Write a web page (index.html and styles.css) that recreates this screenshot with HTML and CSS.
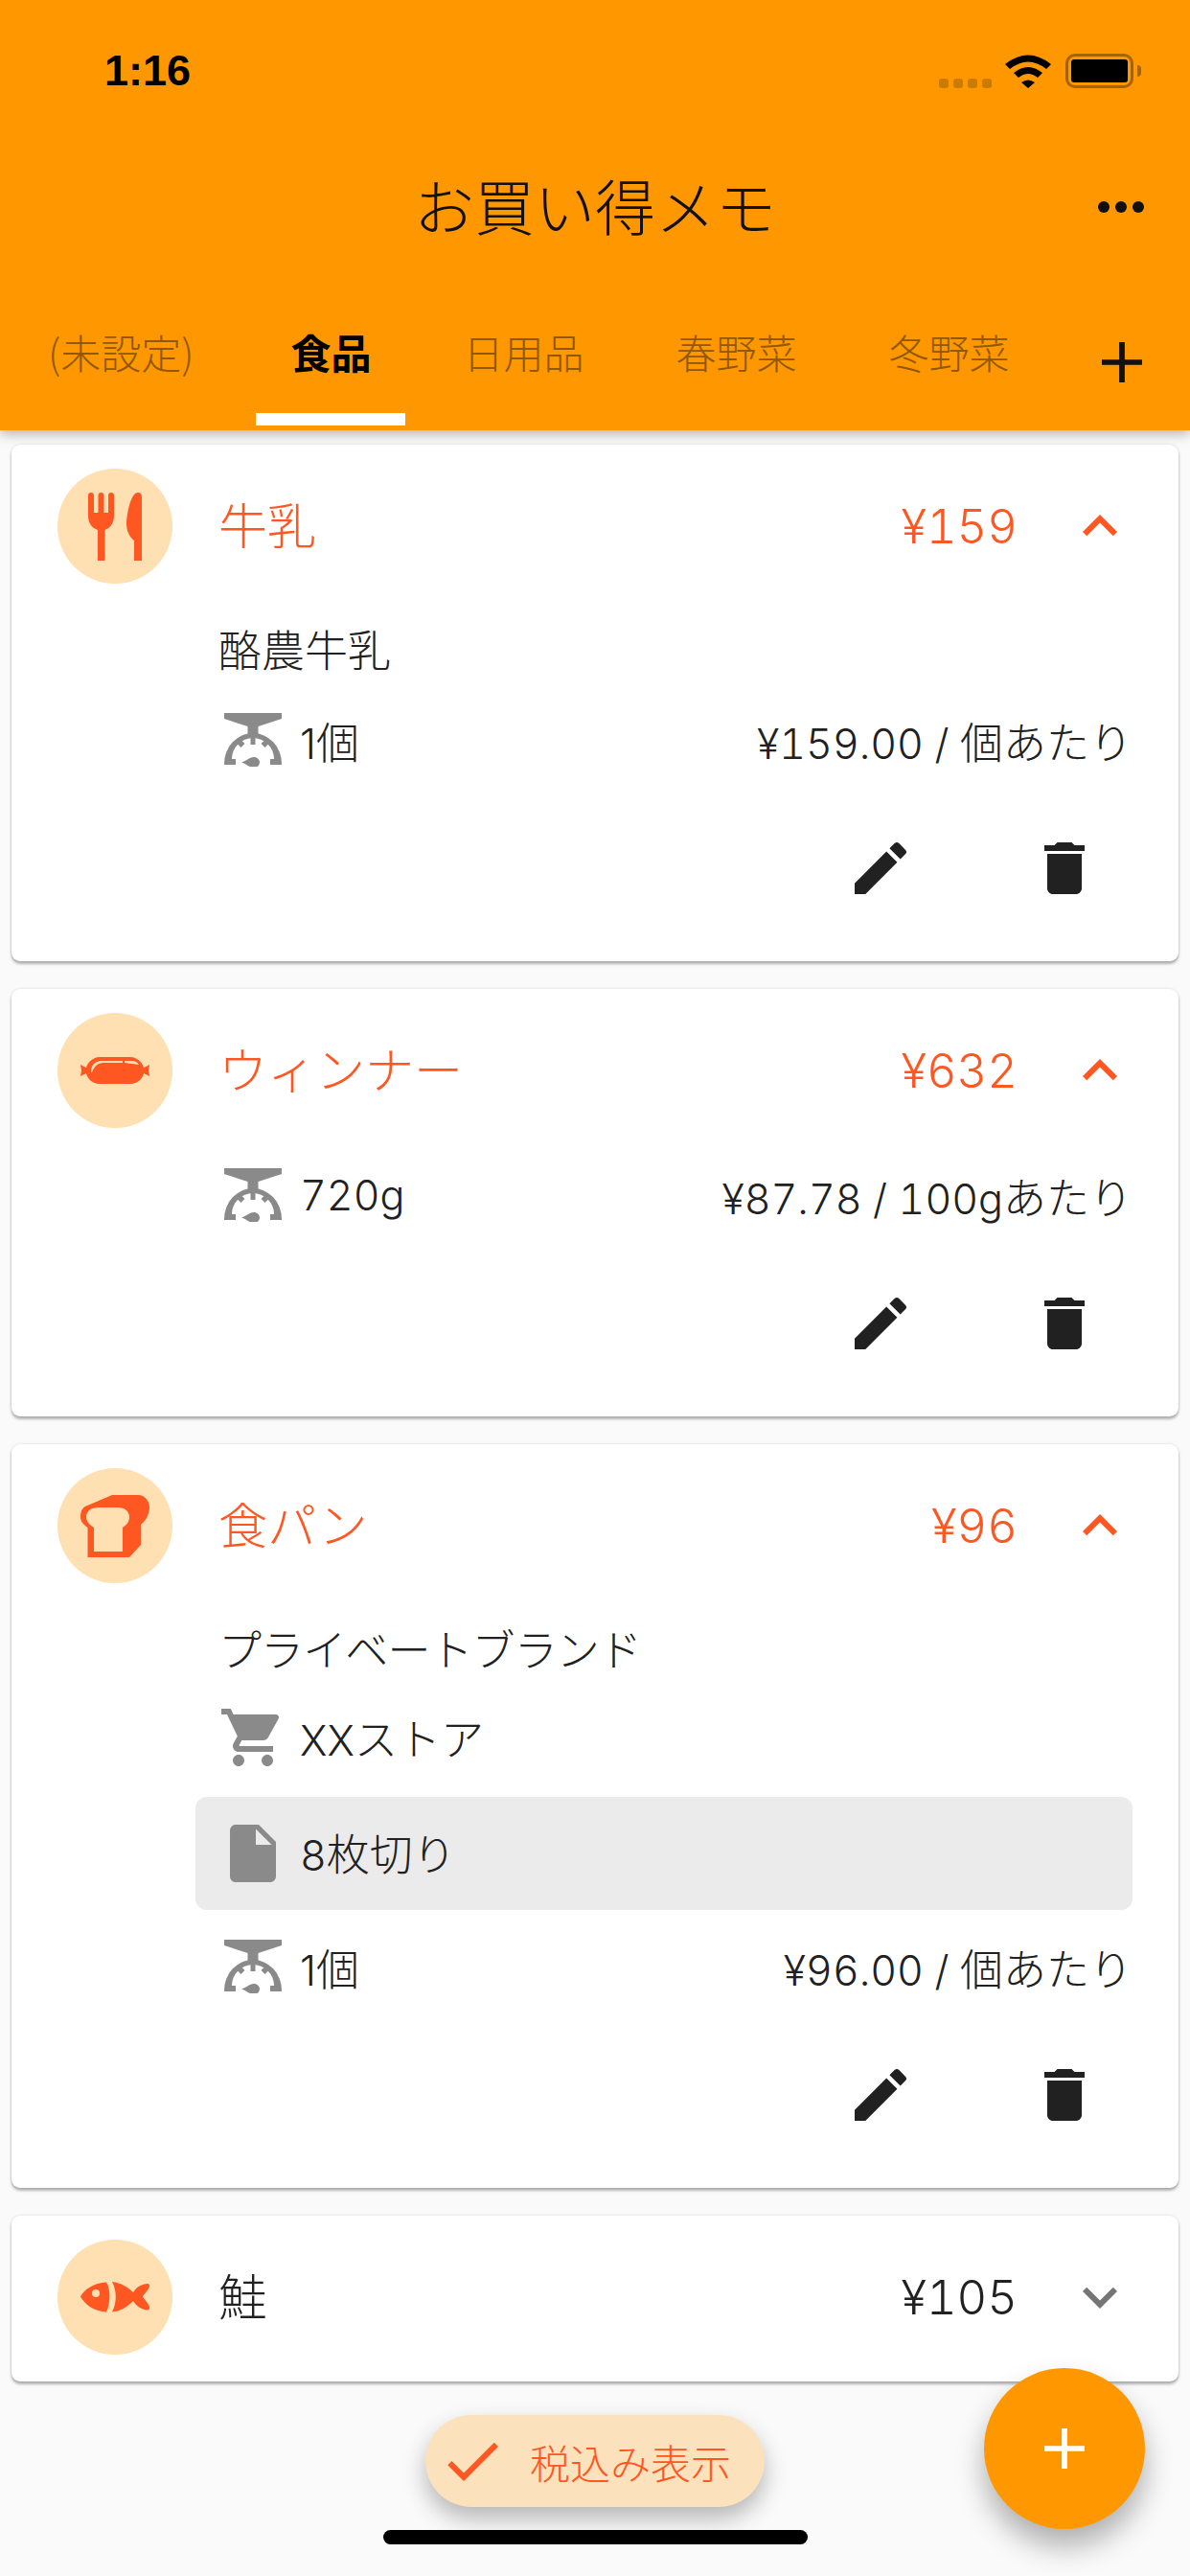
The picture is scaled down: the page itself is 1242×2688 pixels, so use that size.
FILE: index.html
```html
<!DOCTYPE html>
<html lang="ja">
<head>
<meta charset="utf-8">
<title>お買い得メモ</title>
<link rel="stylesheet" href="styles.css">
</head>
<body>
<div class="screen">
  <header class="appbar">
    <div class="status">
      <span class="time">1:16</span>
      <div class="status-icons">
        <div class="signal"><i></i><i></i><i></i><i></i></div>
        <svg class="wifi" viewBox="0 0 48 36"><path d="M0 11Q24-8 48 11L43 16Q24 1 5 16z"/><path d="M9 20Q24 8 39 20L34 25Q24 17 14 25z"/><path d="M17 30Q24 25 31 30L24 36z"/></svg>
        <div class="battery"><div class="battery-fill"></div></div>
      </div>
    </div>
    <div class="titlebar">
      <h1 class="title">お買い得メモ</h1>
      <div class="more"><i></i><i></i><i></i></div>
    </div>
    <nav class="tabs">
      <span class="tab unset">(未設定)</span>
      <span class="tab active">食品</span>
      <span class="tab">日用品</span>
      <span class="tab">春野菜</span>
      <span class="tab">冬野菜</span>
      <svg class="tab-add" viewBox="0 0 44 44"><path d="M19 0h6v19h19v6H25v19h-6V25H0v-6h19z"/></svg>
    </nav>
  </header>

  <main class="list">
    <article class="card">
      <div class="card-head">
        <div class="avatar">
          <svg class="cat fork" viewBox="0 0 56 71"><path d="M0 3a3 3 0 0 1 6 0V21h4.500V3a3 3 0 0 1 6 0V21H21V3a3 3 0 0 1 6 0V24c0 8-4 13-9.500 15V71H10V39C4 37 0 32 0 24z"/><path d="M56 71H48V50C43 46 40 40 40 32 41 18 45 0 52 0 55 0 56 2 56 5z"/></svg>
        </div>
        <span class="name">牛乳</span>
        <span class="price">¥159</span>
        <svg class="chev" viewBox="0 0 24 24"><path d="M7.410 15.410L12 10.830l4.590 4.580L18 14l-6-6-6 6z"/></svg>
      </div>
      <div class="row sub"><span class="ja">酪農牛乳</span></div>
      <div class="row unit-row">
        <svg class="ico scale" viewBox="0 0 60 56"><use href="#scale"/></svg>
        <span class="qty">1<span class="ja">個</span></span>
        <span class="unit">¥159.00 / <span class="ja">個あたり</span></span>
      </div>
      <div class="actions">
        <svg class="act" viewBox="0 0 24 24"><path d="M3 17.250V21h3.750L17.810 9.940l-3.750-3.750L3 17.250zM20.710 7.040c.39-.39.39-1.020 0-1.410l-2.340-2.340c-.39-.39-1.020-.39-1.410 0l-1.830 1.830 3.750 3.750 1.830-1.830z"/></svg>
        <svg class="act" viewBox="0 0 24 24"><path d="M6 19c0 1.100.9 2 2 2h8c1.100 0 2-.9 2-2V7H6v12zM19 4h-3.500l-1-1h-5l-1 1H5v2h14V4z"/></svg>
      </div>
    </article>

    <article class="card">
      <div class="card-head">
        <div class="avatar">
          <svg class="cat wide" viewBox="0 0 72 28"><path d="M20 0H52C60 0 65 7 66 11L72 8l-1 6 1 6-6-3C65 22 60 28 52 28H20C12 28 7 22 6 17L0 20l1-6-1-6 6 3C7 7 12 0 20 0z"/><path class="shine" d="M11 16C11 9 14 5 21 4H44V6H24C18 6 14 10 12 16zM46 4H54C57 4 60 6 61 8L46 6z"/></svg>
        </div>
        <span class="name">ウィンナー</span>
        <span class="price">¥632</span>
        <svg class="chev" viewBox="0 0 24 24"><path d="M7.410 15.410L12 10.830l4.590 4.580L18 14l-6-6-6 6z"/></svg>
      </div>
      <div class="row unit-row">
        <svg class="ico scale" viewBox="0 0 60 56"><use href="#scale"/></svg>
        <span>720g</span>
        <span class="unit">¥87.78 / 100g<span class="ja">あたり</span></span>
      </div>
      <div class="actions">
        <svg class="act" viewBox="0 0 24 24"><path d="M3 17.250V21h3.750L17.810 9.940l-3.750-3.750L3 17.250zM20.710 7.040c.39-.39.39-1.020 0-1.410l-2.340-2.340c-.39-.39-1.020-.39-1.410 0l-1.830 1.830 3.750 3.750 1.830-1.830z"/></svg>
        <svg class="act" viewBox="0 0 24 24"><path d="M6 19c0 1.100.9 2 2 2h8c1.100 0 2-.9 2-2V7H6v12zM19 4h-3.500l-1-1h-5l-1 1H5v2h14V4z"/></svg>
      </div>
    </article>

    <article class="card">
      <div class="card-head">
        <div class="avatar">
          <svg class="cat wide" viewBox="0 0 72 65"><path fill-rule="evenodd" d="M6 11.500L33 0H60C67 0 72 6 72 13 72 20 68 27 63 31V52L51 65H7.500V34C3 31 0 27 0 23 0 17 2 13 6 11.500zM19 13C11 13 6 17 6 23 6 27 9 31 14 34V59H44V34C49 31 51 27 51 23 51 17 46 13 39 13z"/></svg>
        </div>
        <span class="name">食パン</span>
        <span class="price">¥96</span>
        <svg class="chev" viewBox="0 0 24 24"><path d="M7.410 15.410L12 10.830l4.590 4.580L18 14l-6-6-6 6z"/></svg>
      </div>
      <div class="row sub"><span class="ja kana">プライベートブランド</span></div>
      <div class="row store-row">
        <svg class="ico cart" viewBox="0 0 24 24"><path d="M7 18c-1.100 0-1.990.9-1.990 2S5.900 22 7 22s2-.9 2-2-.9-2-2-2zM1 2v2h2l3.600 7.590-1.350 2.450c-.16.28-.25.61-.25.96 0 1.100.9 2 2 2h12v-2H7.420c-.14 0-.25-.11-.25-.25l.03-.12.9-1.630h7.450c.75 0 1.410-.41 1.750-1.030l3.580-6.470c.08-.14.12-.31.12-.48 0-.55-.45-1-1-1H5.210l-.94-2H1zm16 16c-1.100 0-1.990.9-1.990 2s.89 2 1.990 2 2-.9 2-2-.9-2-2-2z"/></svg>
        <span>XX<span class="ja">ストア</span></span>
      </div>
      <div class="note">
        <svg class="ico doc" viewBox="0 0 24 24"><path d="M6 2c-1.100 0-1.990.9-1.990 2L4 20c0 1.100.89 2 1.990 2H18c1.100 0 2-.9 2-2V8l-6-6H6zm7 7V3.500L18.500 9H13z"/></svg>
        <span>8<span class="ja">枚切り</span></span>
      </div>
      <div class="row unit-row after-note">
        <svg class="ico scale" viewBox="0 0 60 56"><use href="#scale"/></svg>
        <span class="qty">1<span class="ja">個</span></span>
        <span class="unit">¥96.00 / <span class="ja">個あたり</span></span>
      </div>
      <div class="actions">
        <svg class="act" viewBox="0 0 24 24"><path d="M3 17.250V21h3.750L17.810 9.940l-3.750-3.750L3 17.250zM20.710 7.040c.39-.39.39-1.020 0-1.410l-2.340-2.340c-.39-.39-1.020-.39-1.410 0l-1.830 1.830 3.750 3.750 1.830-1.830z"/></svg>
        <svg class="act" viewBox="0 0 24 24"><path d="M6 19c0 1.100.9 2 2 2h8c1.100 0 2-.9 2-2V7H6v12zM19 4h-3.500l-1-1h-5l-1 1H5v2h14V4z"/></svg>
      </div>
    </article>

    <article class="card">
      <div class="card-head closed">
        <div class="avatar">
          <svg class="cat wide" viewBox="0 0 72 32"><path fill-rule="evenodd" d="M27 .5C14 1 4 8 0 15.500 4 23 14 31 27 31.500 31 24 32 8 27 .5zM16 8a4 4 0 1 1 0 8 4 4 0 0 1 0-8z"/><path d="M33 0C42 1 50 6 55 11 58 6 63 2.500 70 2 72 2 72 3 72 5 70 10 66 13 65 15.500 66 18 70 21 72 26 72 28 72 29.500 70 29.500 63 29 58 25 55 20 50 25 42 31 33 31.500 38 22 38 9 33 0z"/></svg>
        </div>
        <span class="name plain">鮭</span>
        <span class="price plain">¥105</span>
        <svg class="chev grey" viewBox="0 0 24 24"><path d="M16.590 8.590L12 13.170 7.410 8.590 6 10l6 6 6-6z"/></svg>
      </div>
    </article>
  </main>

  <div class="chip">
    <svg class="check" viewBox="0 0 24 24"><path d="M9 16.170L4.830 12l-1.420 1.410L9 19 21 7l-1.410-1.410z"/></svg>
    <span class="ja">税込み表示</span>
  </div>
  <button class="fab" type="button">
    <svg viewBox="0 0 44 44"><path d="M19 0h6v19h19v6H25v19h-6V25H0v-6h19z"/></svg>
  </button>
  <div class="home"></div>
</div>

<svg class="defs" width="0" height="0" aria-hidden="true">
  <symbol id="scale" viewBox="0 0 60 56">
    <path d="M0 0H60V6L35.500 14V22H24.500V14L0 6z"/>
    <path d="M0 54V53A30 32 0 0 1 60 53V54H48V48H52A22 22 0 0 0 8 48H12V54z"/>
    <path d="M27.500 22h5v11h-5z"/>
    <path d="M12.500 31l4-4 5 5-4 4zM47.500 31l-4-4-5 5 4 4z"/>
    <path d="M18 51.500C22 51 26 46 31 46c3.500 0 6 2.500 6 5.500S34.500 57 31 57c-5 0-9-4.500-13-5.500z"/>
  </symbol>
</svg>
</body>
</html>
```

FILE: styles.css
```css
* { box-sizing: border-box; }

html, body {
  margin: 0;
  padding: 0;
  background: #fafafa;
}

body {
  font-family: Inter, "Noto Sans CJK JP", sans-serif;
  font-variant-numeric: tabular-nums;
  color: #212121;
}

.ja {
  font-family: "Noto Sans CJK JP", sans-serif;
  font-size: 45px;
  font-weight: 300;
}

.kana { letter-spacing: -.9px; }

.qty { font-variant-numeric: normal; }

.screen {
  position: relative;
  width: 1242px;
  height: 2688px;
  overflow: hidden;
  background: #fafafa;
}

.defs { position: absolute; }

/* app bar */
.appbar {
  position: relative;
  z-index: 2;
  height: 449px;
  background: #ff9800;
  box-shadow: 0 4px 12px rgba(0, 0, 0, .28);
  color: #111;
}

.status {
  display: flex;
  align-items: center;
  justify-content: space-between;
  height: 148px;
  padding: 0 59px 0 109px;
}

.time {
  font-family: "Liberation Sans", sans-serif;
  font-size: 45px;
  font-weight: 700;
  color: #000;
}

.status-icons {
  display: flex;
  align-items: center;
}

.signal {
  display: flex;
  gap: 5px;
  margin: 25px 14px 0 0;
}

.signal i {
  width: 10px;
  height: 10px;
  border-radius: 3px;
  background: #cc7a00;
}

.wifi {
  width: 48px;
  height: 36px;
  fill: #000;
}

.battery {
  position: relative;
  width: 71px;
  height: 36px;
  margin-left: 15px;
  padding: 3px;
  border: 3px solid #a66300;
  border-radius: 10px;
}

.battery::after {
  content: "";
  position: absolute;
  top: 9px;
  right: -11px;
  width: 4px;
  height: 12px;
  border-radius: 0 4px 4px 0;
  background: #a66300;
}

.battery-fill {
  height: 100%;
  border-radius: 3px;
  background: #000;
}

.titlebar {
  position: relative;
  display: flex;
  align-items: center;
  justify-content: center;
  height: 134px;
  padding-bottom: 5px;
}

.title {
  margin: 0;
  font-family: "Noto Sans CJK JP", sans-serif;
  font-size: 63px;
  font-weight: 300;
  line-height: 1;
  color: #111;
}

.more {
  position: absolute;
  top: 62px;
  right: 48px;
  display: flex;
  gap: 6px;
}

.more i {
  width: 12px;
  height: 12px;
  border-radius: 50%;
  background: #111;
}

.tabs {
  display: flex;
  align-items: stretch;
  height: 167px;
  padding-left: 2px;
}

.tab {
  position: relative;
  display: flex;
  align-items: flex-start;
  padding: 55px 48px 0;
  font-family: "Noto Sans CJK JP", sans-serif;
  font-size: 42px;
  line-height: 60px;
  font-weight: 300;
  color: #915800;
}

.tab.unset { padding-right: 53px; }

.tab.active {
  font-weight: 700;
  color: #000;
}

.tab.active::after {
  content: "";
  position: absolute;
  left: 12px;
  right: 12px;
  bottom: 5px;
  height: 13px;
  background: #fff;
}

.tab-add {
  width: 42px;
  height: 42px;
  margin: 75px 50px 0 auto;
  fill: #111;
}

/* list */
.list {
  display: flex;
  flex-direction: column;
  gap: 29px;
  padding: 15px 12px 0;
}

.card {
  padding: 25px 0 0;
  background: #fff;
  border-radius: 9px;
  box-shadow: 0 3px 3px rgba(0, 0, 0, .28), 0 0 3px rgba(0, 0, 0, .14);
}

.card-head {
  display: flex;
  align-items: center;
  height: 120px;
  padding-left: 48px;
}

.card-head.closed { margin-bottom: 28px; }

.avatar {
  display: flex;
  flex: none;
  align-items: center;
  justify-content: center;
  width: 120px;
  height: 120px;
  border-radius: 50%;
  background: #ffe0b2;
}

.cat { fill: #ff5722; }

.cat.fork {
  width: 56px;
  height: 71px;
}

.cat.wide {
  width: 72px;
  height: auto;
}

.shine { fill: #ffe0b2; }

.name {
  margin-left: 48px;
  padding-bottom: 6px;
  font-family: "Noto Sans CJK JP", sans-serif;
  font-size: 51px;
  font-weight: 300;
  color: #ff5722;
}

.price {
  margin-left: auto;
  font-size: 49px;
  font-weight: 300;
  color: #ff5722;
}

.name.plain,
.price.plain { color: #212121; }

.chev {
  width: 72px;
  height: 72px;
  margin: 0 46px 0 50px;
  flex: none;
  fill: #ff5722;
}

.chev.grey { fill: #757575; }

.row {
  display: flex;
  align-items: center;
  padding: 0 48px 0 216px;
  font-size: 43px;
  font-weight: 300;
  color: #212121;
}

.sub { height: 96px; margin-top: 19px; }
.unit-row { height: 96px; }
.card-head + .unit-row { margin-top: 22px; }
.store-row { height: 91px; }

.ico {
  flex: none;
  fill: #8a8a8a;
}

.scale {
  width: 60px;
  height: 56px;
  margin: 0 19px 0 6px;
}

.cart {
  width: 72px;
  height: 72px;
  margin-right: 13px;
}

.doc {
  width: 72px;
  height: 72px;
  margin-right: 13px;
}

.unit { margin-left: auto; }

.note {
  display: flex;
  align-items: center;
  height: 118px;
  margin: 17px 48px 0 192px;
  padding-left: 24px;
  font-size: 43px;
  font-weight: 300;
  background: #ebebeb;
  border-radius: 12px;
}

.note span { padding-bottom: 4px; }

.note .ja { padding-bottom: 0; }

.after-note { margin-top: 11px; }

.actions {
  display: flex;
  justify-content: flex-end;
  gap: 120px;
  height: 183px;
  padding: 50px 83px 0 0;
}

.act {
  width: 72px;
  height: 72px;
  fill: #212121;
}

/* overlays */
.chip {
  position: absolute;
  left: 444px;
  top: 2520px;
  display: flex;
  align-items: center;
  width: 354px;
  height: 96px;
  padding-left: 13px;
  background: #fbe2bd;
  border-radius: 48px;
  box-shadow: 0 12px 24px rgba(0, 0, 0, .28);
  color: #ff5722;
}

.chip .ja { font-size: 42px; }

.check {
  width: 72px;
  height: 72px;
  margin-right: 24px;
  fill: #ff5722;
}

.fab {
  position: absolute;
  left: 1027px;
  top: 2471px;
  display: flex;
  align-items: center;
  justify-content: center;
  width: 168px;
  height: 168px;
  padding: 0;
  border: 0;
  border-radius: 50%;
  background: #ff9800;
  box-shadow: 0 18px 30px rgba(0, 0, 0, .3);
}

.fab svg {
  width: 42px;
  height: 42px;
  fill: #fff;
}

.home {
  position: absolute;
  left: 400px;
  top: 2640px;
  width: 443px;
  height: 15px;
  border-radius: 8px;
  background: #000;
}
```
